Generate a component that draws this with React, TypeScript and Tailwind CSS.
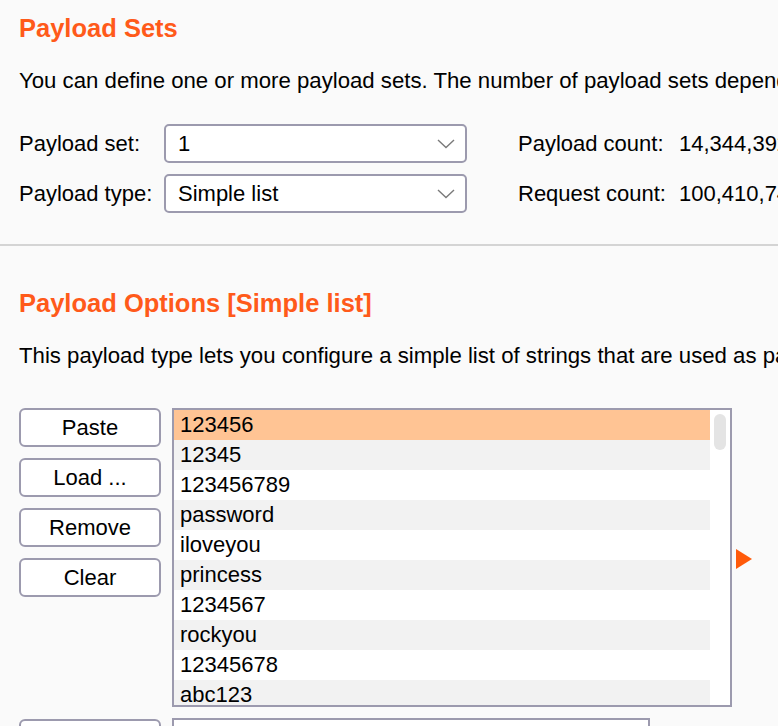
import React from 'react';

const words = [
  '123456',
  '12345',
  '123456789',
  'password',
  'iloveyou',
  'princess',
  '1234567',
  'rockyou',
  '12345678',
  'abc123',
  'nicole',
];

function Chevron() {
  return (
    <svg width="18" height="10" viewBox="0 0 18 10" className="shrink-0">
      <path d="M1 1 L9 8.5 L17 1" fill="none" stroke="#7a7a7a" strokeWidth="1.4" />
    </svg>
  );
}

function Select({ value }: { value: string }) {
  return (
    <div className="flex h-[39px] w-[303px] shrink-0 items-center justify-between rounded-[5px] border-2 border-[#9c9aae] bg-white pl-[12px] pr-[10px]">
      <span>{value}</span>
      <Chevron />
    </div>
  );
}

function Btn({ label }: { label: string }) {
  return (
    <div className="flex h-[39px] w-[142px] shrink-0 items-center justify-center rounded-[6px] border-2 border-[#9c9aae] bg-white">
      {label}
    </div>
  );
}

export default function App() {
  return (
    <div
      className="h-[726px] w-[778px] overflow-hidden whitespace-nowrap bg-[#fafafa] text-[22px] leading-none text-black"
      style={{ fontFamily: '"Liberation Sans", Arial, sans-serif' }}
    >
      {/* Payload sets */}
      <div className="pl-[19px] pt-[16px]">
        <h2 className="text-[25.5px] font-bold leading-[25px] text-[#ff5a1a]">Payload Sets</h2>
        <p className="mt-[28px] text-[22.2px] leading-[24px]">
          You can define one or more payload sets. The number of payload sets depends on the attack type defined in the Positions tab.
        </p>
        <div className="mt-[31px] flex">
          <div className="flex w-[145px] shrink-0 flex-col gap-[11px]">
            <div className="flex h-[39px] items-center">Payload set:</div>
            <div className="flex h-[39px] items-center">Payload type:</div>
          </div>
          <div className="flex shrink-0 flex-col gap-[11px]">
            <Select value="1" />
            <Select value="Simple list" />
          </div>
          <div className="ml-[51px] flex shrink-0 flex-col gap-[11px]">
            <div className="flex h-[39px] items-center">
              <span className="w-[161px] shrink-0">Payload count:</span>
              <span>14,344,392</span>
            </div>
            <div className="flex h-[39px] items-center">
              <span className="w-[161px] shrink-0">Request count:</span>
              <span>100,410,744</span>
            </div>
          </div>
        </div>
      </div>

      <div className="mt-[31px] h-[2px] w-full bg-[#d4d4d4]" />

      {/* Payload options */}
      <div className="pl-[19px] pt-[45px]">
        <h2 className="text-[25.5px] font-bold leading-[25px] text-[#ff5a1a]">Payload Options [Simple list]</h2>
        <p className="mt-[28px] text-[22.2px] leading-[24px]">
          This payload type lets you configure a simple list of strings that are used as payloads.
        </p>

        <div className="mt-[40px] flex items-start">
          <div className="flex shrink-0 flex-col gap-[11px]">
            <Btn label="Paste" />
            <Btn label="Load ..." />
            <Btn label="Remove" />
            <Btn label="Clear" />
          </div>
          <div className="ml-[11px] flex h-[299px] w-[560px] shrink-0 overflow-hidden border-2 border-[#9c9aae] bg-white">
            <div className="flex w-[536px] shrink-0 flex-col">
              {words.map((w, i) => (
                <div
                  key={w}
                  className={
                    'flex h-[30px] shrink-0 items-center pl-[6px] ' +
                    (i === 0 ? 'bg-[#ffc494]' : i % 2 === 1 ? 'bg-[#f2f2f2]' : 'bg-white')
                  }
                >
                  {w}
                </div>
              ))}
            </div>
            <div className="flex flex-1 justify-center pt-[4px]">
              <div className="h-[36px] w-[12px] rounded-full bg-[#e4e4e4]" />
            </div>
          </div>
          <svg width="17" height="20" viewBox="0 0 17 20" className="ml-[4px] mt-[141px] shrink-0">
            <polygon points="0,0 16,10 0,20" fill="#ff5a0a" />
          </svg>
        </div>

        <div className="mt-[11px] flex items-start">
          <div className="mt-[1px]">
            <Btn label="Add" />
          </div>
          <div className="ml-[11px] h-[39px] w-[478px] shrink-0 border-2 border-[#9c9aae] bg-white" />
        </div>
      </div>
    </div>
  );
}
